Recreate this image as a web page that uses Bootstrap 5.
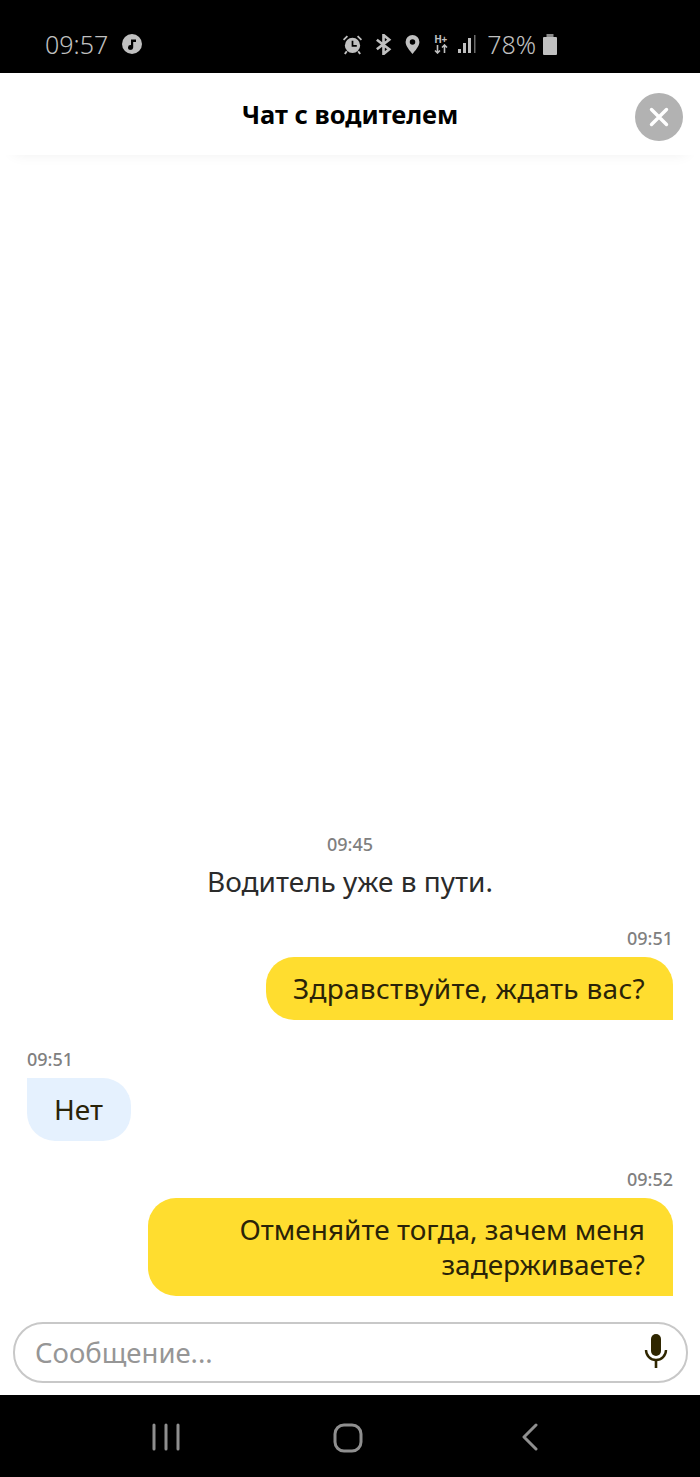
<!DOCTYPE html>
<html lang="en">
<head>
    <meta charset="UTF-8">
    <meta name="viewport" content="width=device-width, initial-scale=1">
    <title>Чат с водителем</title>
    <link href="https://cdn.jsdelivr.net/npm/bootstrap@5.3.0/dist/css/bootstrap.min.css" rel="stylesheet">
    <style>
        html, body { height: 1477px; }
        body { font-family: "Noto Sans", "Open Sans", sans-serif; background: #fff; overflow: hidden; }
        .phone { height: 1477px; }
        .status-bar { height: 73px; background: #000; color: #c0c0c0; padding: 15px 143px 0 45px; font-size: 25px; font-weight: 300; line-height: 58px; }
        .status-bar svg { display: block; }
        .status-left { gap: 14px; }
        .status-right { gap: 11px; }
        .net-stack { width: 14px; margin-left: 2px; margin-right: -1px; }
        .net-label { font-size: 10px; font-weight: 700; line-height: 10px; letter-spacing: -.3px; white-space: nowrap; }
        .batt-icon { margin-left: -4px; }
        .chat-head { height: 82px; background: #fff; box-shadow: 0 12px 14px -14px rgba(0,0,0,.08); z-index: 2; }
        .chat-title { font-size: 25.5px; font-weight: 700; color: #000; line-height: 82px; }
        .close-round { position: absolute; right: 17px; top: 20px; width: 48px; height: 48px; border-radius: 50%; background: #b2b2b2; border: 0; padding: 0; }
        .feed { padding: 0 27px 26px 27px; }
        .stamp { font-size: 18px; font-weight: 500; color: #808080; line-height: 23px; }
        .sys-msg { font-size: 28px; color: #2b2b2b; line-height: 38px; margin-top: 6px; margin-bottom: 27px; }
        .bubble { font-size: 28px; line-height: 35px; color: #2a2308; padding: 14px 28px 14px 27px; margin-top: 7px; border-radius: 28px; }
        .bubble-me { background: #ffdd2f; border-bottom-right-radius: 0; text-align: right; }
        .bubble-them { background: #e5f1fe; border-top-left-radius: 0; }
        .bubble-wide { width: 525px; }
        .bubble-spaced { letter-spacing: .3px; }
        .msg-gap { margin-bottom: 27px; }
        .msg-gap-lg { margin-bottom: 28px; }
        .input-wrap { padding: 0 12px 12px 13px; }
        .msg-input { height: 61px; border: 2px solid #c8c8c8; border-radius: 30px; padding: 0 18px 0 20px; }
        .msg-hint { font-size: 27.5px; color: #969696; }
        .msg-mic { margin-top: -4px; }
        .nav-bar { height: 82px; background: #000; padding: 28px 4px 0 0; }
        .nav-bar svg { display: block; }
        .nav-slot { width: 182px; }
    </style>
</head>
<body>

    <div class="phone d-flex flex-column">

        <div class="status-bar d-flex justify-content-between align-items-center">
            <div class="status-left d-flex align-items-center">
                <span>09:57</span>
                <svg width="20" height="20" viewBox="0 0 20 20">
                    <circle cx="10" cy="10" r="10" fill="#c0c0c0"/>
                    <path d="M9 5.5h5v2.6h-2.8v5.4a2.6 2.4 0 1 1-2.2-2.4z" fill="#000"/>
                </svg>
            </div>
            <div class="status-right d-flex align-items-center">
                <svg width="21" height="21" viewBox="0 0 22 22" fill="#c0c0c0">
                    <path d="M1 5.5 5 1.5l1.3 1.3-4 4zM21 5.5l-4-4-1.3 1.3 4 4z"/>
                    <circle cx="11" cy="12" r="8"/>
                    <path d="M11 7v5.5h4.5" fill="none" stroke="#000" stroke-width="1.8"/>
                    <path d="M5 18l-2 3M17 18l2 3" stroke="#c0c0c0" stroke-width="2" fill="none"/>
                </svg>
                <svg width="19" height="21" viewBox="0 0 20 22" fill="none" stroke="#c0c0c0" stroke-width="2.8">
                    <path d="M3 6l13 10-6 5V1l6 5L3 16"/>
                </svg>
                <svg width="17" height="19" viewBox="0 0 18 22">
                    <path d="M9 0a8 8 0 0 1 8 8c0 5-5 10-8 14-3-4-8-9-8-14a8 8 0 0 1 8-8z" fill="#c0c0c0"/>
                    <circle cx="9" cy="8" r="3.2" fill="#000"/>
                </svg>
                <div class="net-stack d-flex flex-column">
                    <span class="net-label">H+</span>
                    <svg width="14" height="10" viewBox="0 0 14 10" fill="none" stroke="#c0c0c0" stroke-width="1.6">
                        <path d="M3.5 1v8M1 6.5l2.5 2.5L6 6.5M10.5 9V1M8 3.5 10.5 1 13 3.5"/>
                    </svg>
                </div>
                <svg width="18" height="18" viewBox="0 0 18 18" fill="#c0c0c0">
                    <rect x="0" y="14" width="3" height="4"/>
                    <rect x="5" y="8" width="3" height="10"/>
                    <rect x="10" y="3" width="3" height="15"/>
                    <rect x="16" y="0" width="1.5" height="18" fill="#6a6a6a"/>
                </svg>
                <span>78%</span>
                <svg class="batt-icon" width="14" height="21" viewBox="0 0 14 21" fill="#c0c0c0">
                    <rect x="3.5" y="0" width="7" height="3" fill="#8a8a8a"/>
                    <rect x="0" y="3" width="14" height="18" rx="1"/>
                </svg>
            </div>
        </div>

        <div class="chat-head position-relative text-center">
            <div class="chat-title">Чат с водителем</div>
            <button type="button" class="close-round d-flex align-items-center justify-content-center" aria-label="Закрыть">
                <svg width="20" height="20" viewBox="0 0 20 20" stroke="#fff" stroke-width="3.4" stroke-linecap="round">
                    <path d="M2.5 2.5l15 15M17.5 2.5l-15 15"/>
                </svg>
            </button>
        </div>

        <div class="feed flex-grow-1 d-flex flex-column justify-content-end">
            <div class="stamp text-center">09:45</div>
            <div class="sys-msg text-center">Водитель уже в пути.</div>

            <div class="msg-gap-lg d-flex flex-column align-items-end">
                <div class="stamp">09:51</div>
                <div class="bubble bubble-me bubble-spaced">Здравствуйте, ждать вас?</div>
            </div>

            <div class="msg-gap d-flex flex-column align-items-start">
                <div class="stamp">09:51</div>
                <div class="bubble bubble-them">Нет</div>
            </div>

            <div class="d-flex flex-column align-items-end">
                <div class="stamp">09:52</div>
                <div class="bubble bubble-me bubble-wide">Отменяйте тогда, зачем меня задерживаете?</div>
            </div>
        </div>

        <div class="input-wrap">
            <div class="msg-input d-flex align-items-center justify-content-between">
                <span class="msg-hint">Сообщение...</span>
                <svg class="msg-mic" width="24" height="34" viewBox="0 0 24 34" fill="none">
                    <rect x="7" y="0" width="10" height="22" rx="5" fill="#2f2600"/>
                    <path d="M2 16a10 10 0 0 0 20 0" stroke="#2f2600" stroke-width="2.4"/>
                    <path d="M12 26v8" stroke="#2f2600" stroke-width="2.6"/>
                </svg>
            </div>
        </div>

        <div class="nav-bar d-flex justify-content-center">
            <div class="nav-slot d-flex justify-content-center">
                <svg width="28" height="28" viewBox="0 0 28 28" stroke="#8f8f8f" stroke-width="3" stroke-linecap="round" fill="none">
                    <path d="M2 2v24M14 2v24M26 2v24"/>
                </svg>
            </div>
            <div class="nav-slot d-flex justify-content-center">
                <svg width="30" height="30" viewBox="0 0 30 30" stroke="#8f8f8f" stroke-width="3" fill="none">
                    <rect x="2" y="2" width="26" height="26" rx="9"/>
                </svg>
            </div>
            <div class="nav-slot d-flex justify-content-center">
                <svg width="18" height="28" viewBox="0 0 18 28" stroke="#8f8f8f" stroke-width="3" stroke-linecap="round" stroke-linejoin="round" fill="none">
                    <path d="M15 2 3 14l12 12"/>
                </svg>
            </div>
        </div>

    </div>

    <script src="https://cdn.jsdelivr.net/npm/bootstrap@5.3.0/dist/js/bootstrap.bundle.min.js"></script>
</body>
</html>
